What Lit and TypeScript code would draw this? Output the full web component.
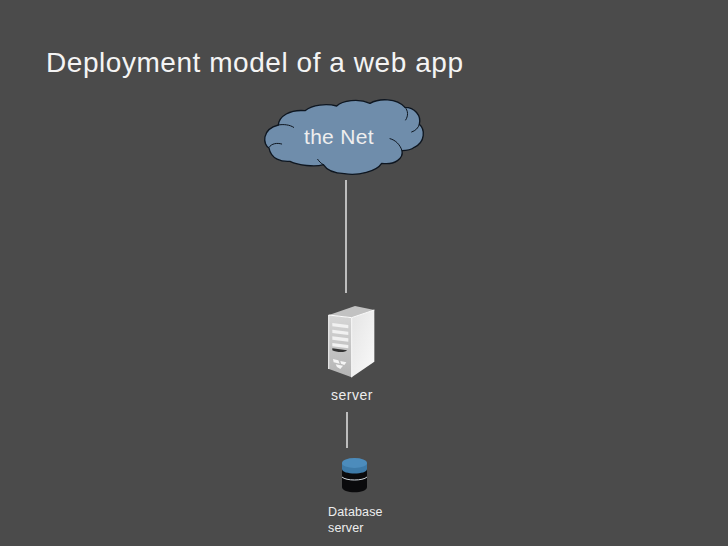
import { LitElement, html, css, svg } from "lit";
import { customElement } from "lit/decorators.js";

@customElement("app-root")
export class AppRoot extends LitElement {
  static styles = css`
    :host {
      display: block;
      width: 728px;
      height: 546px;
      background: #4b4b4b;
      font-family: "Liberation Sans", Arial, sans-serif;
      color: #fff;
      overflow: hidden;
    }
    .slide {
      position: relative;
      width: 728px;
      height: 546px;
      padding: 45px 0 0 46px;
      box-sizing: border-box;
    }
    h1 {
      margin: 0;
      font-size: 28px;
      line-height: 36px;
      font-weight: 400;
      letter-spacing: 0.55px;
      color: #f4f4f4;
    }
    .node {
      position: absolute;
      display: block;
    }
    .cloud { left: 255px; top: 90px; }
    .server { left: 315px; top: 295px; }
    .db { left: 342px; top: 450px; }
    .link { position: absolute; width: 2px; background: #bdbdbd; }
    .l1 { left: 345px; top: 180px; height: 113px; }
    .l2 { left: 346px; top: 412px; height: 36px; }
    .label { position: absolute; color: #eeeeee; white-space: nowrap; }
    .net { left: 304px; top: 124px; font-size: 21px; line-height: 26px; letter-spacing: 0.3px; }
    .srv { left: 331px; top: 387px; font-size: 14px; line-height: 17px; letter-spacing: 0.5px; }
    .dbl { left: 328px; top: 504px; font-size: 12.5px; line-height: 16px; letter-spacing: 0.15px; }
  `;

  cloud() {
    return html`<svg class="node cloud" width="180" height="100" viewBox="0 0 540 300">
      <path fill="#6f8dab" stroke="#0e1620" stroke-width="4" stroke-linejoin="round"
        d="M70 105 C72 78 105 58 150 62 C172 44 215 40 245 48 C262 32 310 24 345 40
           C372 24 425 24 450 52 C478 52 500 76 493 103 C510 118 512 155 478 172
           C468 180 452 182 441 182 C446 205 420 226 380 220 C365 244 310 258 268 251
           C240 250 215 240 205 224 C180 232 130 226 105 214 C80 216 48 208 42 174
           C24 165 18 118 70 105 Z"/>
      <g fill="none" stroke="#0e1620" stroke-width="3" stroke-linecap="round">
        <path d="M70 105 C85 102 104 104 116 112"/>
        <path d="M42 172 C50 160 66 158 80 162"/>
        <path d="M493 103 C490 114 482 122 470 126"/>
        <path d="M450 52 C460 62 460 78 452 90"/>
        <path d="M441 182 C436 165 422 150 405 146"/>
        <path d="M205 224 C198 220 192 214 188 208"/>
      </g>
    </svg>`;
  }

  server() {
    const slots = [0, 1, 2, 3];
    return html`<svg class="node server" width="70" height="115" viewBox="0 0 210 345">
      <defs>
        <linearGradient id="right" x1="0" y1="0" x2="1" y2="1">
          <stop offset="0" stop-color="#e4e4e4" />
          <stop offset="1" stop-color="#fafafa" />
        </linearGradient>
        <linearGradient id="front" x1="0" y1="0" x2="0" y2="1">
          <stop offset="0" stop-color="#d6d6d6" />
          <stop offset="1" stop-color="#b4b4b4" />
        </linearGradient>
      </defs>
      <polygon fill="#c2c2c2" points="42,60 120,33 178,45 110,68"/>
      <polygon fill="url(#right)" points="110,68 178,45 178,200 110,247"/>
      <polygon fill="url(#front)" points="42,60 110,68 110,247 42,222"/>
      <polyline fill="none" stroke="#fff" stroke-width="3" points="41,222 41,60 110,68 178,45"/>
      <polyline fill="none" stroke="#fff" stroke-width="3" points="110,68 110,247"/>
      ${slots.map(
        (i) => svg`<polygon fill="#f1f1f1" points="${52},${84 + i * 20} ${100},${90 + i * 20} ${100},${100 + i * 20} ${52},${94 + i * 20}"/>`
      )}
      <path fill="#333" d="M52 160 L96 166 C92 174 62 172 52 166 Z"/>
      <g fill="#f5f5f5">
        <polygon points="54,192 70,196 74,206 56,202"/>
        <polygon points="76,198 94,202 88,210 78,206"/>
        <polygon points="62,208 84,212 76,222 66,216"/>
      </g>
    </svg>`;
  }

  db() {
    return html`<svg class="node db" width="25" height="46" viewBox="0 0 25 46">
      <path fill="#0a0a0c" d="M0 13 V37 C0 44 25 44 25 37 V13 Z"/>
      <path fill="none" stroke="#cfd6dc" stroke-width="1" d="M0 27 C4 31 21 31 25 27"/>
      <path fill="#3d7aa8" d="M0 13 V19 C0 25 25 25 25 19 V13 Z"/>
      <ellipse cx="12.5" cy="13" rx="12.5" ry="5" fill="#4c8cbc"/>
    </svg>`;
  }

  render() {
    return html`<div class="slide">
      <h1>Deployment model of a web app</h1>
      ${this.cloud()}
      <span class="label net">the Net</span>
      <div class="link l1"></div>
      ${this.server()}
      <span class="label srv">server</span>
      <div class="link l2"></div>
      ${this.db()}
      <span class="label dbl">Database<br />server</span>
    </div>`;
  }
}
